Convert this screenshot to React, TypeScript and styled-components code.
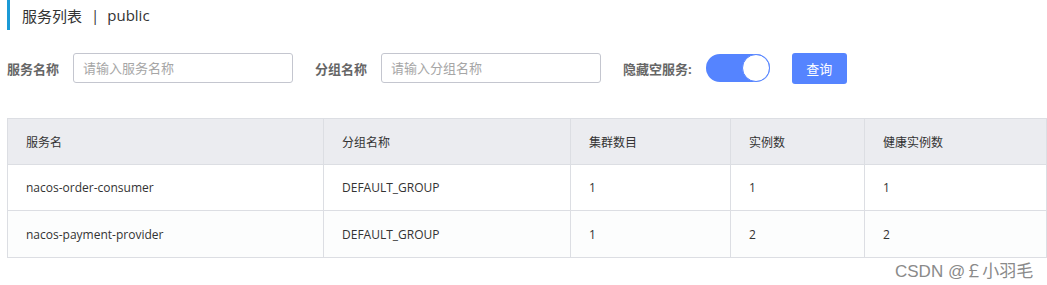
import styled, { createGlobalStyle } from "styled-components";

const GlobalStyle = createGlobalStyle`
    body{
        margin: 0;
        background: #fff;
        font-family: "Open Sans", "Noto Sans CJK SC", sans-serif;
        color: #333;
    }
`;

const Page = styled.div`
    position: relative;
    width: 1047px;
    height: 285px;
    padding: 0 0 0 7px;
    box-sizing: border-box;
`;
const Title = styled.div`
    display: flex;
    align-items: center;
    height: 30px;
    border-left: 3px solid #1b9ad6;
    padding-left: 12px;
    font-size: 15px;
    color: #333;
    span{
        margin: 0 8px 0 9px;
    }
`;
const Form = styled.div`
    display: flex;
    align-items: center;
    margin-top: 23px;
    height: 30px;
`;
const Label = styled.label`
    font-size: 13px;
    font-weight: bold;
    color: #666;
    margin-right: 14px;
    white-space: nowrap;
`;
const Input = styled.input`
    box-sizing: border-box;
    width: 220px;
    height: 30px;
    border: 1px solid #c4c6cf;
    border-radius: 3px;
    padding: 0 9px;
    font-size: 13px;
    font-family: inherit;
    margin-right: 22px;
    outline: none;
    &::placeholder{
        color: #a6a6a6;
    }
`;
const Switch = styled.div<{ $on: boolean }>`
    position: relative;
    width: 64px;
    height: 28px;
    border-radius: 14px;
    background: ${(p) => (p.$on ? "#5584ff" : "#e5e7eb")};
    margin-right: 22px;
    &::after{
        content: "";
        position: absolute;
        top: 0;
        ${(p) => (p.$on ? "right: 0;" : "left: 0;")}
        width: 26px;
        height: 26px;
        border-radius: 50%;
        background: #fff;
        border: 1px solid #5584ff;
    }
`;
const Button = styled.button`
    width: 55px;
    height: 31px;
    border: none;
    border-radius: 3px;
    background: #5584ff;
    color: #fff;
    font-size: 13px;
    font-family: inherit;
    padding: 0;
`;
const Table = styled.table`
    margin-top: 35px;
    width: 1039px;
    border-collapse: collapse;
    table-layout: fixed;
    font-size: 12px;
    color: #333;
`;
const Th = styled.th<{ $w: number }>`
    width: ${(p) => p.$w - 37}px;
    height: 45px;
    background: #ebecf0;
    border: 1px solid #dcdee3;
    text-align: left;
    font-weight: normal;
    padding: 0 18px;
`;
const Row = styled.tr<{ $alt: boolean }>`
    background: ${(p) => (p.$alt ? "#fcfdfd" : "#fff")};
`;
const Td = styled.td<{ $last?: boolean }>`
    height: ${(p) => (p.$last ? 46 : 45)}px;
    border: 1px solid #dcdee3;
    padding: 0 18px;
`;
const Watermark = styled.div`
    position: absolute;
    left: 895px;
    top: 257px;
    font-family: "Liberation Sans", "Noto Sans CJK SC", sans-serif;
    font-size: 17px;
    color: #8a8a8a;
    white-space: nowrap;
`;

const columns = [
    { name: "服务名", w: 316 },
    { name: "分组名称", w: 247 },
    { name: "集群数目", w: 160 },
    { name: "实例数", w: 134 },
    { name: "健康实例数", w: 182 },
];

const rows = [
    ["nacos-order-consumer", "DEFAULT_GROUP", "1", "1", "1"],
    ["nacos-payment-provider", "DEFAULT_GROUP", "1", "2", "2"],
];

function App() {
    return (
        <Page>
            <GlobalStyle />
            <Title>服务列表<span>|</span>public</Title>
            <Form>
                <Label>服务名称</Label>
                <Input placeholder="请输入服务名称" />
                <Label>分组名称</Label>
                <Input placeholder="请输入分组名称" />
                <Label>隐藏空服务:</Label>
                <Switch $on={true} />
                <Button>查询</Button>
            </Form>
            <Table>
                <thead>
                    <tr>
                        {columns.map((c) => (
                            <Th key={c.name} $w={c.w}>{c.name}</Th>
                        ))}
                    </tr>
                </thead>
                <tbody>
                    {rows.map((r, i) => (
                        <Row key={r[0]} $alt={i % 2 === 1}>
                            {r.map((v, j) => (
                                <Td key={j} $last={i === rows.length - 1}>{v}</Td>
                            ))}
                        </Row>
                    ))}
                </tbody>
            </Table>
            <Watermark>CSDN @￡小羽毛</Watermark>
        </Page>
    );
}

export default App;
